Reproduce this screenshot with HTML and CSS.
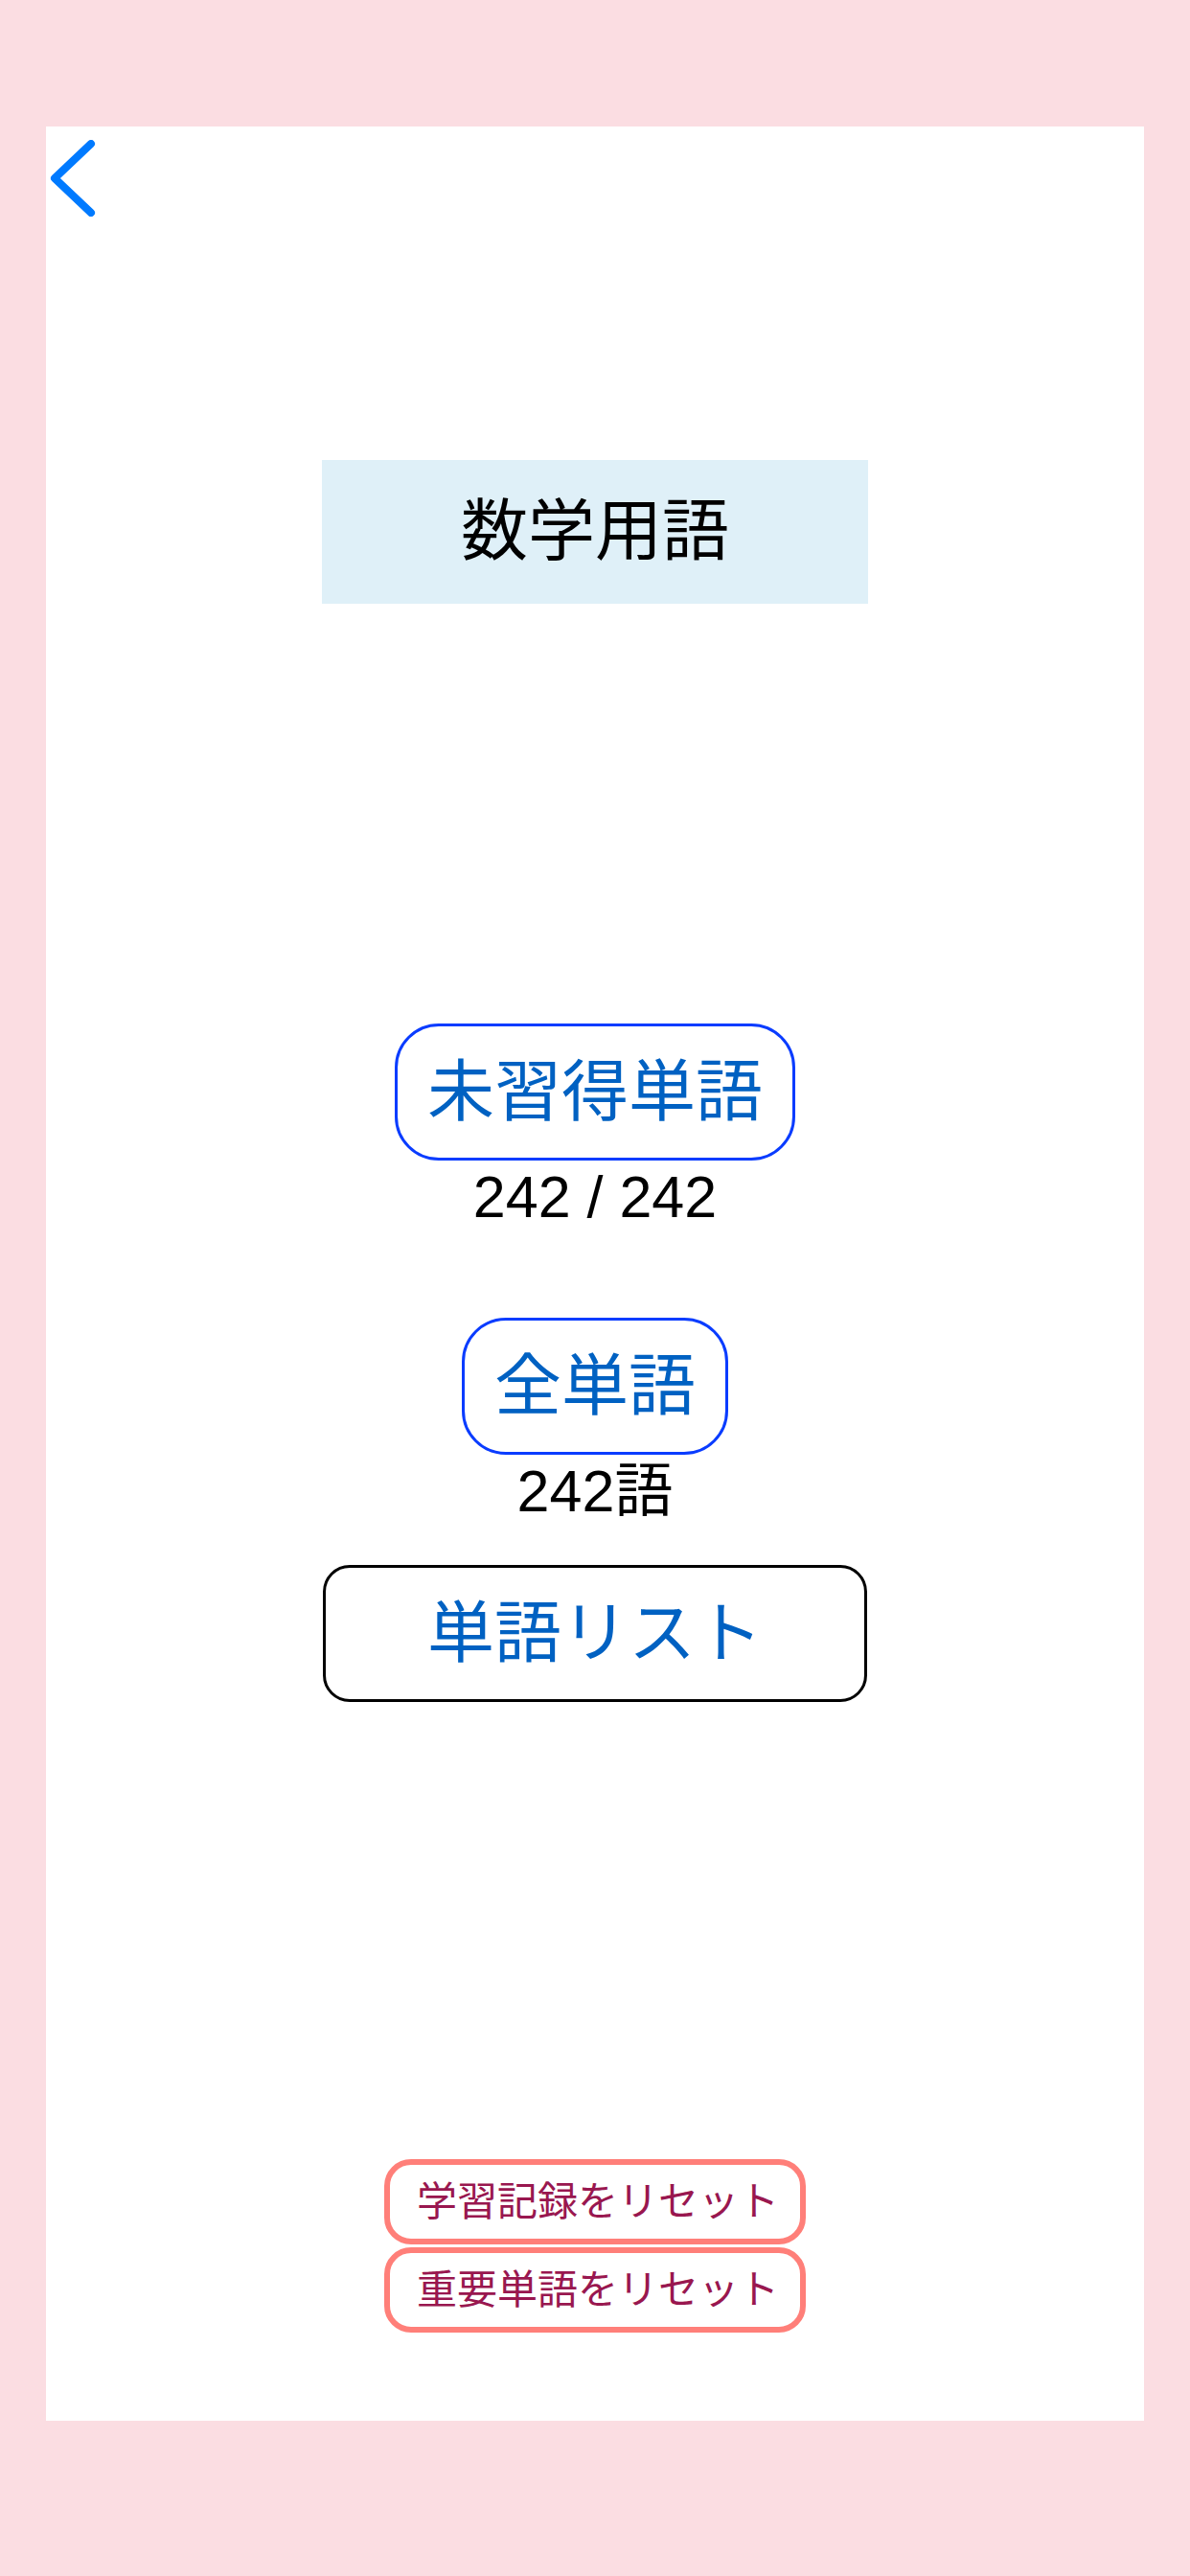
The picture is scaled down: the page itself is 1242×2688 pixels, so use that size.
FILE: index.html
```html
<!DOCTYPE html>
<html lang="ja">
<head>
<meta charset="utf-8">
<title>数学用語</title>
<link rel="stylesheet" href="styles.css">
</head>
<body>
<div class="panel">
  <div class="header">
    <svg class="back" width="50" height="80" viewBox="0 0 50 80" aria-label="戻る">
      <path d="M45 4 L7 40 L45 76" fill="none" stroke="#007aff" stroke-width="8" stroke-linecap="round" stroke-linejoin="round"/>
    </svg>
  </div>
  <div class="title">数学用語</div>
  <div class="pill pill-first">未習得単語</div>
  <div class="count">242 / 242</div>
  <div class="pill pill-second">全単語</div>
  <div class="count">242語</div>
  <div class="list-btn">単語リスト</div>
  <div class="reset reset-first">学習記録をリセット</div>
  <div class="reset reset-second">重要単語をリセット</div>
</div>
</body>
</html>
```
FILE: styles.css
```css
html, body {
  margin: 0;
  padding: 0;
}
body {
  background: #fbdde2;
  width: 1242px;
  height: 2688px;
  overflow: hidden;
  font-family: "Liberation Sans", "Noto Sans CJK JP", sans-serif;
}
.panel {
  margin: 132px 48px 0;
  height: 2394px;
  background: #ffffff;
  display: flex;
  flex-direction: column;
  align-items: center;
}
.header {
  align-self: stretch;
  height: 94px;
  padding: 14px 0 0 2px;
  box-sizing: border-box;
}
.back {
  display: block;
}
.title {
  margin-top: 254px;
  width: 570px;
  height: 150px;
  background: #dff0f8;
  color: #000;
  font-size: 70px;
  line-height: 1;
  display: flex;
  align-items: center;
  justify-content: center;
}
.pill {
  box-sizing: border-box;
  height: 143px;
  padding: 0 31px;
  border: 3px solid #0a3cff;
  border-radius: 46px;
  color: #0061c2;
  font-size: 70px;
  line-height: 1;
  display: flex;
  align-items: center;
  justify-content: center;
}
.pill-first {
  margin-top: 438px;
}
.pill-second {
  margin-top: 95px;
}
.count {
  margin-top: 7px;
  font-size: 61px;
  line-height: 62px;
  color: #000;
}
.list-btn {
  margin-top: 46px;
  box-sizing: border-box;
  width: 568px;
  height: 143px;
  border: 3px solid #000;
  border-radius: 28px;
  color: #0061c2;
  font-size: 70px;
  line-height: 1;
  display: flex;
  align-items: center;
  justify-content: center;
}
.reset {
  box-sizing: border-box;
  width: 440px;
  height: 89px;
  padding-left: 6px;
  border: 6px solid #ff7f79;
  border-radius: 28px;
  color: #99174f;
  font-size: 42px;
  line-height: 1;
  display: flex;
  align-items: center;
  justify-content: center;
}
.reset-first {
  margin-top: 477px;
}
.reset-second {
  margin-top: 3px;
}
```
